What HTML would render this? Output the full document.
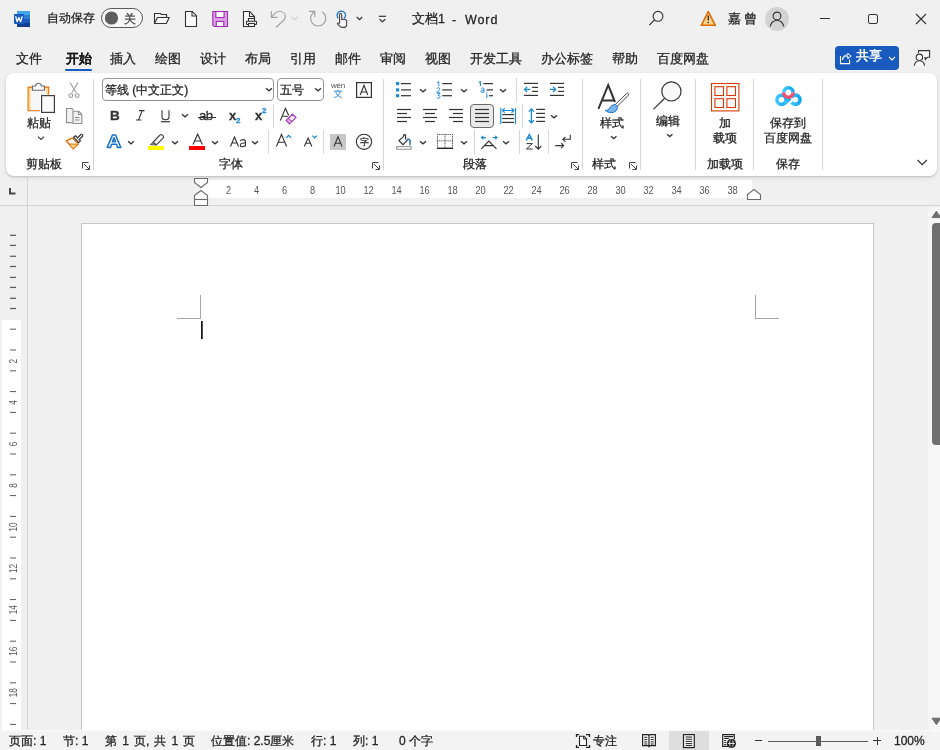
<!DOCTYPE html>
<html><head><meta charset="utf-8"><style>
html,body{margin:0;padding:0}
body{width:940px;height:750px;position:relative;overflow:hidden;background:#f0f0f0;font-family:"Liberation Sans",sans-serif}
div,svg{position:absolute}
.t{white-space:nowrap;will-change:transform;-webkit-text-stroke:0.3px currentColor}
</style></head><body>
<svg style="left:13px;top:10px;" width="19" height="19" viewBox="0 0 19 19">
<rect x="4" y="1" width="13" height="4" fill="#41a5ee"/>
<rect x="4" y="5" width="13" height="4" fill="#2b7cd3"/>
<rect x="4" y="9" width="13" height="4" fill="#185abd"/>
<rect x="4" y="13" width="13" height="4" fill="#103f91"/>
<rect x="1" y="4" width="10" height="10" rx="1" fill="#185abd"/>
<path d="M2.6 6.3 L4.2 11.7 L5.9 7.6 L7.6 11.7 L9.3 6.3" fill="none" stroke="#fff" stroke-width="1.3" stroke-linejoin="round"/>
</svg>
<div style="left:101px;top:8px;width:42px;height:20px;box-sizing:border-box;border:1px solid #5a5a5a;border-radius:10px;background:#f7f7f7"></div>
<svg style="left:101px;top:8px;" width="42" height="20" viewBox="0 0 42 20"><circle cx="10.5" cy="10" r="6.6" fill="#5d5d5d"/></svg>
<div class="t" style="left:124px;top:13px;font-size:12px;line-height:12px;color:#444;">关</div>
<svg style="left:150px;top:8px;" width="24" height="20" viewBox="0 0 24 20"><path d="M4.5 15.5 V5.5 H10.5 L11.5 6.5 H16.5 V9.5" fill="none" stroke="#333" stroke-width="1.1"/>
<path d="M4.5 15.5 L7.5 9.5 H19.3 L16.3 15.5 Z" fill="#fafafa" stroke="#333" stroke-width="1.1" stroke-linejoin="round"/></svg>
<svg style="left:183px;top:9px;" width="16" height="20" viewBox="0 0 16 20"><path d="M2.5 2.5 H9.3 L13.5 6.7 V17.5 H2.5 Z" fill="#fafafa" stroke="#333" stroke-width="1.1"/><path d="M9 2.5 V7 H13.5" fill="none" stroke="#333" stroke-width="1.1"/></svg>
<svg style="left:210px;top:9px;" width="20" height="20" viewBox="0 0 20 20"><path d="M2.8 2.5 H17.5 V17.5 H4.2 L2.8 16.1 Z" fill="#dca1e4" stroke="#9f2cb3" stroke-width="1.1"/>
<rect x="5.8" y="2.5" width="8.3" height="6" fill="#fafafa" stroke="#9f2cb3" stroke-width="1.1"/>
<rect x="6.3" y="12.5" width="7.5" height="5" fill="#fafafa" stroke="#9f2cb3" stroke-width="1.1"/></svg>
<svg style="left:241px;top:9px;" width="20" height="20" viewBox="0 0 20 20"><path d="M9.5 17.5 H2.5 V2.5 H8.5 L13.5 7.5 V9.5" fill="#fafafa" stroke="#333" stroke-width="1.1"/>
<path d="M8.5 2.5 V7.5 H13.5" fill="none" stroke="#333" stroke-width="1.1"/>
<rect x="7.5" y="9.5" width="6" height="3" fill="#fafafa" stroke="#333" stroke-width="1.1"/>
<rect x="5.5" y="12.3" width="10" height="3.2" rx="0.5" fill="#fafafa" stroke="#333" stroke-width="1.1"/>
<rect x="7.5" y="14.5" width="6" height="3" fill="#fafafa" stroke="#333" stroke-width="1.1"/></svg>
<svg style="left:266px;top:8px;" width="22" height="22" viewBox="0 0 22 22"><path d="M5.4 3.3 V9.3 H11.5" fill="none" stroke="#a3a3a3" stroke-width="1.2"/><path d="M5.8 9 C8 5.5 11 3.5 14 3.5 C17.5 3.5 19.3 6 19.3 8.5 C19.3 10 18.5 11.5 17.5 12.5 L10 19.5" fill="none" stroke="#a3a3a3" stroke-width="1.2"/></svg>
<svg style="left:290px;top:14px;" width="9" height="8" viewBox="0 0 9 8"><path d="M1.5 3 L4.5 5.8 L7.5 3" fill="none" stroke="#b5b5b5" stroke-width="1"/></svg>
<svg style="left:306px;top:8px;" width="22" height="22" viewBox="0 0 22 22"><path d="M16 3.8 A7.6 7.6 0 1 1 8.8 3.6" fill="none" stroke="#a3a3a3" stroke-width="1.2"/><path d="M3 3.3 H8.8 V9" fill="none" stroke="#a3a3a3" stroke-width="1.2"/></svg>
<svg style="left:332px;top:8px;" width="20" height="22" viewBox="0 0 20 22"><path d="M6.3 10.2 A4.2 4.2 0 1 1 11.9 10.6" fill="none" stroke="#1a73c9" stroke-width="1.3"/>
<path d="M7.6 15.5 V6.5 A1.05 1.05 0 0 1 9.7 6.5 V11.6 C11 11.2 13.6 11.6 14.6 12.6 V16.8 C14.6 18.6 13.6 19.4 12.2 19.4 H9.8 C8.8 19.4 8.3 19 7.6 18.2 L5.4 15.6 C5.8 14.9 6.8 14.9 7.6 15.5" fill="#f6f6f6" stroke="#444" stroke-width="1.1" stroke-linejoin="round"/></svg>
<svg style="left:354px;top:14px;" width="11" height="8" viewBox="0 0 11 8"><path d="M2.8 3 L5.5 5.7 L8.2 3" fill="none" stroke="#333" stroke-width="1.2"/></svg>
<svg style="left:376px;top:12px;" width="14" height="14" viewBox="0 0 14 14"><path d="M2.8 4.3 H10" stroke="#333" stroke-width="1.2"/><path d="M3.5 7.2 L6.4 9.8 L9.3 7.2" fill="none" stroke="#333" stroke-width="1.2"/></svg>
<svg style="left:646px;top:9px;" width="20" height="20" viewBox="0 0 20 20"><circle cx="12" cy="7.3" r="4.9" fill="none" stroke="#333" stroke-width="1.1"/><path d="M8.5 10.8 L3.3 16.2" stroke="#333" stroke-width="1.2"/></svg>
<svg style="left:699px;top:9px;" width="20" height="19" viewBox="0 0 20 19"><path d="M9.3 2.6 L16.3 16.3 H2.3 Z" fill="#f6d58a" stroke="#e06b00" stroke-width="1.6" stroke-linejoin="round"/><path d="M9.3 6.5 V11.5" stroke="#333" stroke-width="1.4"/><rect x="8.6" y="12.8" width="1.4" height="1.4" fill="#333"/></svg>
<svg style="left:765px;top:7px;" width="24" height="24" viewBox="0 0 24 24"><circle cx="12" cy="12" r="12" fill="#d3d3d3"/><circle cx="12" cy="9" r="3.9" fill="none" stroke="#333" stroke-width="1.1"/><path d="M5.2 19.5 C6 16 8.5 13.5 12 13.5 C15.5 13.5 18 16 18.8 19.5" fill="none" stroke="#333" stroke-width="1.1"/></svg>
<div style="left:820px;top:18px;width:10px;height:1px;background:#333"></div>
<div style="left:868px;top:14px;width:10px;height:10px;box-sizing:border-box;border:1px solid #333;border-radius:2px"></div>
<svg style="left:914px;top:12px;" width="14" height="14" viewBox="0 0 14 14"><path d="M2 2 L12 12 M12 2 L2 12" stroke="#333" stroke-width="1.1"/></svg>
<div class="t" style="left:47px;top:12px;font-size:12px;line-height:12px;color:#262626;">自动保存</div>
<div class="t" style="left:412px;top:13px;font-size:12.5px;line-height:12.5px;color:#262626;">文档1</div>
<div class="t" style="left:452px;top:13.5px;font-size:12.5px;line-height:12.5px;color:#262626;">-</div>
<div class="t" style="left:464.5px;top:13.5px;font-size:12.5px;line-height:12.5px;color:#262626;letter-spacing:0.9px">Word</div>
<div class="t" style="left:728px;top:13px;font-size:12.5px;line-height:12.5px;color:#1a1a1a;font-weight:500">嘉</div>
<div class="t" style="left:744px;top:13px;font-size:12.5px;line-height:12.5px;color:#1a1a1a;font-weight:500">曾</div>
<div class="t" style="left:16px;top:52px;font-size:13px;line-height:13px;color:#262626;">文件</div>
<div class="t" style="left:65.5px;top:52px;font-size:13px;line-height:13px;color:#1a1a1a;font-weight:bold;-webkit-text-stroke:0.1px currentColor">开始</div>
<div class="t" style="left:110px;top:52px;font-size:13px;line-height:13px;color:#262626;">插入</div>
<div class="t" style="left:155px;top:52px;font-size:13px;line-height:13px;color:#262626;">绘图</div>
<div class="t" style="left:200px;top:52px;font-size:13px;line-height:13px;color:#262626;">设计</div>
<div class="t" style="left:245px;top:52px;font-size:13px;line-height:13px;color:#262626;">布局</div>
<div class="t" style="left:290px;top:52px;font-size:13px;line-height:13px;color:#262626;">引用</div>
<div class="t" style="left:335px;top:52px;font-size:13px;line-height:13px;color:#262626;">邮件</div>
<div class="t" style="left:380px;top:52px;font-size:13px;line-height:13px;color:#262626;">审阅</div>
<div class="t" style="left:425px;top:52px;font-size:13px;line-height:13px;color:#262626;">视图</div>
<div class="t" style="left:470px;top:52px;font-size:13px;line-height:13px;color:#262626;">开发工具</div>
<div class="t" style="left:541px;top:52px;font-size:13px;line-height:13px;color:#262626;">办公标签</div>
<div class="t" style="left:612px;top:52px;font-size:13px;line-height:13px;color:#262626;">帮助</div>
<div class="t" style="left:657px;top:52px;font-size:13px;line-height:13px;color:#262626;">百度网盘</div>
<div style="left:65px;top:69px;width:27px;height:2px;background:#185abd;border-radius:1px"></div>
<div style="left:835px;top:46px;width:64px;height:24px;background:#185abd;border-radius:4px"></div>
<div class="t" style="left:856px;top:50px;font-size:12.5px;line-height:12.5px;color:#fff;font-weight:bold;-webkit-text-stroke:0">共享</div>
<div style="left:6px;top:73px;width:931px;height:103px;background:#fff;border-radius:8px;box-shadow:0 1px 2px rgba(0,0,0,0.16),0 2px 5px rgba(0,0,0,0.07)"></div>
<svg style="left:24px;top:80px;" width="34" height="36" viewBox="0 0 34 36">
<path d="M5.1 8.1 V30.3 H15.9 V15 H23.7 V8.1 Z" fill="#f7f7f7"/>
<path d="M5.6 30.3 V8.6 H23.2 V14.6" fill="none" stroke="#fad88b" stroke-width="2"/>
<path d="M4.1 7.1 V30.8 H15.9 M4.1 7.1 H24.7 V14.6" fill="none" stroke="#e56c00" stroke-width="1.1"/>
<path d="M8.5 6 H11.5 C12 4 13 3.2 14.5 3.2 C16 3.2 17 4 17.5 6 H20.5 V10.3 H8.5 Z" fill="#fafafa" stroke="#6b6b6b" stroke-width="1.1"/>
<rect x="17.6" y="15.6" width="12.8" height="16.8" fill="#fafafa" stroke="#404040" stroke-width="1.2"/>
</svg>
<svg style="left:34px;top:134px;" width="14" height="8" viewBox="0 0 14 8"><path d="M4 2.6 L7 5.4 L10 2.6" fill="none" stroke="#333" stroke-width="1.1"/></svg>
<svg style="left:66px;top:80px;" width="16" height="20" viewBox="0 0 16 20"><path d="M4 2.5 L10.2 12.8 M12 2.5 L5.8 12.8" stroke="#9a9a9a" stroke-width="1.1" fill="none"/><circle cx="4.8" cy="15.6" r="1.9" fill="none" stroke="#9a9a9a" stroke-width="1.1"/><circle cx="11.2" cy="15.6" r="1.9" fill="none" stroke="#9a9a9a" stroke-width="1.1"/></svg>
<svg style="left:64px;top:106px;" width="20" height="20" viewBox="0 0 20 20"><path d="M8.5 16.6 H2.5 V2.5 H7.8 L9.5 4.2" fill="#f2f2f2" stroke="#8e8e8e" stroke-width="1.1"/>
<path d="M9 5.2 H14.8 L17.8 8.2 V17.5 H9 Z" fill="#f2f2f2" stroke="#8e8e8e" stroke-width="1.1"/>
<path d="M14.5 5.2 V8.5 H17.8" fill="none" stroke="#8e8e8e" stroke-width="1.1"/>
<path d="M11 11.5 H15.5 M11 14 H15.5" stroke="#8e8e8e" stroke-width="1"/></svg>
<svg style="left:64px;top:132px;" width="20" height="20" viewBox="0 0 20 20"><path d="M2.2 8.8 L8.6 5.9 L14.3 12 L9.2 16.8 Z" fill="#fafafa" stroke="#e56c00" stroke-width="1.3" stroke-linejoin="round"/>
<path d="M6.5 12.6 L12.5 12.3 L9.2 16.4 Z" fill="#fbd98a"/>
<path d="M5.5 12 L12.6 12.3" stroke="#e56c00" stroke-width="1.1"/>
<path d="M9.6 5.2 L11.5 3.6 L16.5 8.8 L14.6 10.6 Z" fill="#fafafa" stroke="#333" stroke-width="1.2" stroke-linejoin="round"/>
<path d="M13 6.4 L16.8 2.5 A1.3 1.3 0 0 1 18.6 4.3 L14.7 8.1" fill="#fafafa" stroke="#333" stroke-width="1.2"/></svg>
<svg style="left:81px;top:161px;" width="10" height="10" viewBox="0 0 10 10"><path d="M1.5 7.5 V1.5 H7.5" fill="none" stroke="#444" stroke-width="1"/><path d="M3 3 L8.2 8.2 M8.5 4.5 V8.5 H4.5" fill="none" stroke="#444" stroke-width="1"/></svg>
<div style="left:93px;top:79px;width:1px;height:91px;background:#d6d6d6"></div>
<div style="left:383px;top:79px;width:1px;height:91px;background:#d6d6d6"></div>
<div style="left:582px;top:79px;width:1px;height:91px;background:#d6d6d6"></div>
<div style="left:640px;top:79px;width:1px;height:91px;background:#d6d6d6"></div>
<div style="left:695px;top:79px;width:1px;height:91px;background:#d6d6d6"></div>
<div style="left:753px;top:79px;width:1px;height:91px;background:#d6d6d6"></div>
<div style="left:822px;top:79px;width:1px;height:91px;background:#d6d6d6"></div>
<div class="t" style="left:26px;top:158px;font-size:12px;line-height:12px;color:#262626;">剪贴板</div>
<div class="t" style="left:219px;top:158px;font-size:12px;line-height:12px;color:#262626;">字体</div>
<div class="t" style="left:463px;top:158px;font-size:12px;line-height:12px;color:#262626;">段落</div>
<div class="t" style="left:592px;top:158px;font-size:12px;line-height:12px;color:#262626;">样式</div>
<div class="t" style="left:707px;top:158px;font-size:12px;line-height:12px;color:#262626;">加载项</div>
<div class="t" style="left:776px;top:158px;font-size:12px;line-height:12px;color:#262626;">保存</div>
<div class="t" style="left:27px;top:117px;font-size:12px;line-height:12px;color:#262626;">粘贴</div>
<div class="t" style="left:600px;top:117px;font-size:12px;line-height:12px;color:#262626;">样式</div>
<div class="t" style="left:656px;top:115px;font-size:12px;line-height:12px;color:#262626;">编辑</div>
<div class="t" style="left:719px;top:117px;font-size:12px;line-height:12px;color:#262626;">加</div>
<div class="t" style="left:713px;top:132px;font-size:12px;line-height:12px;color:#262626;">载项</div>
<div class="t" style="left:770px;top:117px;font-size:12px;line-height:12px;color:#262626;">保存到</div>
<div class="t" style="left:764px;top:132px;font-size:12px;line-height:12px;color:#262626;">百度网盘</div>
<div style="left:102px;top:78px;width:172px;height:23px;box-sizing:border-box;border:1px solid #969696;border-radius:4px;background:#fff"></div>
<div class="t" style="left:105px;top:84px;font-size:12px;line-height:12px;color:#262626;">等线 (中文正文)</div>
<div style="left:277px;top:78px;width:47px;height:23px;box-sizing:border-box;border:1px solid #969696;border-radius:4px;background:#fff"></div>
<div class="t" style="left:280px;top:84px;font-size:12px;line-height:12px;color:#262626;">五号</div>
<svg style="left:265px;top:87px;" width="8" height="6" viewBox="0 0 8 6"><path d="M1 1.3 L4.0 3.8 L7 1.3" fill="none" stroke="#333" stroke-width="1.3"/></svg>
<svg style="left:314px;top:87px;" width="8" height="6" viewBox="0 0 8 6"><path d="M1 1.3 L4.0 3.8 L7 1.3" fill="none" stroke="#333" stroke-width="1.3"/></svg>
<svg style="left:329px;top:80px;will-change:transform;" width="18" height="20" viewBox="0 0 18 20"><text x="9" y="8.3" text-anchor="middle" font-family="Liberation Sans" font-size="8" fill="#555" letter-spacing="-0.3">wén</text>
<path d="M5 11.2 H13 M9 9.8 V11.2 M6.8 12 C7.5 14.5 9.5 16.5 12.8 17.8 M11.2 12 C10.5 14.5 8.5 16.5 5.2 17.8" fill="none" stroke="#2b8ad8" stroke-width="1"/></svg>
<svg style="left:354px;top:80px;" width="20" height="20" viewBox="0 0 20 20"><rect x="2.6" y="2.6" width="14.8" height="14.8" fill="#fafafa" stroke="#333" stroke-width="1.2"/><path d="M6.2 15 L10 5.2 L13.8 15 M7.4 12 H12.6" fill="none" stroke="#333" stroke-width="1.1"/></svg>
<div class="t" style="left:110px;top:109px;font-size:13.5px;line-height:13.5px;color:#333;font-family:'Liberation Sans';"><b>B</b></div>
<svg style="left:134px;top:108px;" width="12" height="14" viewBox="0 0 12 14"><path d="M5 2.6 H10.5 M2 12 H7.5 M8.2 2.6 L4.5 12" fill="none" stroke="#333" stroke-width="1.1"/></svg>
<svg style="left:159px;top:108px;" width="14" height="16" viewBox="0 0 14 16"><path d="M3 2.3 V8.5 C3 10.8 4.5 11.8 6.5 11.8 C8.5 11.8 10 10.8 10 8.5 V2.3" fill="none" stroke="#333" stroke-width="1.1"/><path d="M2 13.7 H11" stroke="#333" stroke-width="1.2"/></svg>
<svg style="left:181px;top:113px;" width="8" height="6" viewBox="0 0 8 6"><path d="M1 1.3 L4.0 3.8 L7 1.3" fill="none" stroke="#333" stroke-width="1.3"/></svg>
<div class="t" style="left:199px;top:109px;font-size:13px;line-height:13px;color:#333;font-family:'Liberation Sans';letter-spacing:-0.5px">ab</div>
<div style="left:198px;top:117px;width:18px;height:1px;background:#333"></div>
<div class="t" style="left:229px;top:109px;font-size:13px;line-height:13px;color:#333;font-family:'Liberation Sans';font-weight:bold">x</div>
<div class="t" style="left:236px;top:117px;font-size:8px;line-height:8px;color:#1f8ad6;font-family:'Liberation Sans';font-weight:bold">2</div>
<div class="t" style="left:255px;top:109px;font-size:13px;line-height:13px;color:#333;font-family:'Liberation Sans';font-weight:bold">x</div>
<div class="t" style="left:262px;top:107px;font-size:8px;line-height:8px;color:#1f8ad6;font-family:'Liberation Sans';font-weight:bold">2</div>
<div style="left:273px;top:104px;width:1px;height:24px;background:#d6d6d6"></div>
<svg style="left:278px;top:106px;" width="20" height="20" viewBox="0 0 20 20"><path d="M2.4 14.5 L7.4 2.4 L10.8 9.4 M4.3 10.3 H10" fill="none" stroke="#333" stroke-width="1.1"/>
<path d="M8.2 14.5 L14.4 8.2 L18 11.4 L11.6 17.8 Z" fill="#fafafa" stroke="#a23cb8" stroke-width="1.3" stroke-linejoin="round"/>
<path d="M10.4 12.4 L13.8 15.6" stroke="#a23cb8" stroke-width="1.2"/><path d="M9.3 13.6 L12.7 16.8" stroke="#d9a3e3" stroke-width="1.5"/></svg>
<svg style="left:104px;top:132px;" width="20" height="20" viewBox="0 0 20 20"><path d="M3.2 15.5 L8.5 3 H11.5 L16.8 15.5 H13.6 L12.4 12.3 H7.6 L6.4 15.5 Z M8.5 9.8 H11.5 L10 5.8 Z" fill="#fff" stroke="#1a6fcf" stroke-width="1.6" stroke-linejoin="round"/></svg>
<svg style="left:127px;top:140px;" width="8" height="6" viewBox="0 0 8 6"><path d="M1 1.3 L4.0 3.8 L7 1.3" fill="none" stroke="#333" stroke-width="1.3"/></svg>
<svg style="left:147px;top:132px;" width="18" height="20" viewBox="0 0 18 20"><path d="M6.2 10 L13 3 A1.6 1.6 0 0 1 15.4 3.1 L16 3.8 A1.6 1.6 0 0 1 16.1 6.2 L9.2 13 Z" fill="#fafafa" stroke="#444" stroke-width="1.1" stroke-linejoin="round"/>
<path d="M6.2 10 L3 12.8 L5 12.8 L9.2 13 Z" fill="#777" stroke="#555" stroke-width="0.8"/></svg>
<div style="left:148px;top:146px;width:16px;height:4px;background:#ffff00"></div>
<svg style="left:171px;top:140px;" width="8" height="6" viewBox="0 0 8 6"><path d="M1 1.3 L4.0 3.8 L7 1.3" fill="none" stroke="#333" stroke-width="1.3"/></svg>
<svg style="left:190px;top:132px;" width="16" height="14" viewBox="0 0 16 14"><path d="M3 12.6 L7.7 2.2 L12.4 12.6 M4.6 9 H10.8" fill="none" stroke="#333" stroke-width="1.1"/></svg>
<div style="left:189px;top:146px;width:16px;height:4px;background:#ff0000"></div>
<svg style="left:211px;top:140px;" width="8" height="6" viewBox="0 0 8 6"><path d="M1 1.3 L4.0 3.8 L7 1.3" fill="none" stroke="#333" stroke-width="1.3"/></svg>
<svg style="left:228px;top:135px;" width="22" height="14" viewBox="0 0 22 14"><path d="M2.5 11.5 L6.5 2 L10.5 11.5 M4 8 H9" fill="none" stroke="#333" stroke-width="1.1"/><path d="M12.3 6 C13 4.8 14 4.6 15 4.6 C16.5 4.6 17.5 5.4 17.5 7 V11.6 M17.5 8 C15.5 7.8 12.3 8 12.3 10 C12.3 11.4 13.5 11.8 14.5 11.8 C16 11.8 17.2 10.8 17.5 10" fill="none" stroke="#333" stroke-width="1.1"/></svg>
<svg style="left:251px;top:140px;" width="8" height="6" viewBox="0 0 8 6"><path d="M1 1.3 L4.0 3.8 L7 1.3" fill="none" stroke="#333" stroke-width="1.3"/></svg>
<div style="left:268px;top:130px;width:1px;height:24px;background:#d6d6d6"></div>
<svg style="left:274px;top:132px;" width="20" height="17" viewBox="0 0 20 17"><path d="M2.4 14.5 L7.5 2.5 L12.6 14.5 M4.2 10.2 H10.8" fill="none" stroke="#333" stroke-width="1.1"/><path d="M12.3 5.8 L14.6 3.4 L16.9 5.8" fill="none" stroke="#1f8ad6" stroke-width="1.3"/></svg>
<svg style="left:302px;top:132px;" width="18" height="17" viewBox="0 0 18 17"><path d="M2.3 14.5 L6.1 6 L9.9 14.5 M3.6 11.2 H8.6" fill="none" stroke="#333" stroke-width="1.1"/><path d="M10.4 3.6 L12.7 5.8 L15 3.6" fill="none" stroke="#1f8ad6" stroke-width="1.3"/></svg>
<div style="left:323px;top:130px;width:1px;height:24px;background:#d6d6d6"></div>
<div style="left:330px;top:134px;width:16px;height:16px;background:#c8c8c8"></div>
<svg style="left:330px;top:134px;" width="16" height="16" viewBox="0 0 16 16"><path d="M4 12.5 L8 2.8 L12 12.5 M5.3 9.3 H10.7" fill="none" stroke="#333" stroke-width="1.1"/></svg>
<svg style="left:354px;top:132px;" width="20" height="20" viewBox="0 0 20 20"><circle cx="10" cy="9.8" r="7.6" fill="none" stroke="#333" stroke-width="1.1"/></svg>
<div class="t" style="left:360px;top:138px;font-size:8.5px;line-height:8.5px;color:#333;">字</div>
<svg style="left:371px;top:161px;" width="10" height="10" viewBox="0 0 10 10"><path d="M1.5 7.5 V1.5 H7.5" fill="none" stroke="#444" stroke-width="1"/><path d="M3 3 L8.2 8.2 M8.5 4.5 V8.5 H4.5" fill="none" stroke="#444" stroke-width="1"/></svg>
<svg style="left:395px;top:81px;" width="18" height="18" viewBox="0 0 18 18"><g fill="#1f8ad6"><rect x="1" y="1" width="3.2" height="3.2"/><rect x="1" y="7.3" width="3.2" height="3.2"/><rect x="1" y="13.1" width="3.2" height="3.2"/></g><g stroke="#333" stroke-width="1.2"><path d="M6 2.6 H16"/><path d="M6 8.9 H16"/><path d="M6 14.7 H16"/></g></svg>
<svg style="left:419px;top:88px;" width="8" height="6" viewBox="0 0 8 6"><path d="M1 1.3 L4.0 3.8 L7 1.3" fill="none" stroke="#333" stroke-width="1.3"/></svg>
<svg style="left:436px;top:81px;" width="18" height="19" viewBox="0 0 18 19"><path d="M1.2 1.7999999999999998 L2.8 0.6 V5.199999999999999" fill="none" stroke="#1f8ad6" stroke-width="0.95"/><path d="M0.8 7.699999999999999 C1.1 6.3999999999999995 3.8 6.3 3.8 7.8999999999999995 C3.8 9.1 1.4 10.0 0.8 11.2 H4.1" fill="none" stroke="#1f8ad6" stroke-width="0.95"/><path d="M0.8 12.6 H3.8 L2.1 14.5 C3.8 14.5 4.1 15.2 4.1 15.8 C4.1 17.2 1.8 17.5 0.8 16.8" fill="none" stroke="#1f8ad6" stroke-width="0.95"/><g stroke="#333" stroke-width="1.2"><path d="M6.3 2.6 H16"/><path d="M6.3 8.9 H16"/><path d="M6.3 14.7 H16"/></g></svg>
<svg style="left:460px;top:88px;" width="8" height="6" viewBox="0 0 8 6"><path d="M1 1.3 L4.0 3.8 L7 1.3" fill="none" stroke="#333" stroke-width="1.3"/></svg>
<svg style="left:478px;top:81px;" width="18" height="19" viewBox="0 0 18 19"><path d="M0.8 1.6 L2.4000000000000004 0.4 V5.0" fill="none" stroke="#1f8ad6" stroke-width="1.1"/><path d="M3.2 7.6 C3.6 6.8 6 6.5 6 8.2 V11.4 M6 9.2 C4 9 2.9 9.5 2.9 10.4 C2.9 11.6 5 11.6 6 10.6" fill="none" stroke="#1f8ad6" stroke-width="1"/><path d="M8.8 13.2 V17" stroke="#1f8ad6" stroke-width="1.1"/><rect x="8.3" y="11.4" width="1.1" height="1.1" fill="#1f8ad6"/><g stroke="#333" stroke-width="1.2"><path d="M5.4 2.6 H15"/><path d="M8.5 8.9 H15"/><path d="M11 14.7 H15"/></g></svg>
<svg style="left:499px;top:88px;" width="8" height="6" viewBox="0 0 8 6"><path d="M1 1.3 L4.0 3.8 L7 1.3" fill="none" stroke="#333" stroke-width="1.3"/></svg>
<div style="left:516px;top:78px;width:1px;height:24px;background:#d6d6d6"></div>
<svg style="left:523px;top:81px;" width="17" height="17" viewBox="0 0 17 17"><g stroke="#333" stroke-width="1.2"><path d="M1 2.4 H15"/><path d="M9.1 6.4 H15"/><path d="M9.1 10.4 H15"/><path d="M1 14.4 H15"/></g><path d="M7.2 8.4 H1.8 M4.2 5.8 L1.5 8.4 L4.2 11" fill="none" stroke="#1f8ad6" stroke-width="1.3"/></svg>
<svg style="left:549px;top:81px;" width="17" height="17" viewBox="0 0 17 17"><g stroke="#333" stroke-width="1.2"><path d="M1 2.4 H15"/><path d="M9.1 6.4 H15"/><path d="M9.1 10.4 H15"/><path d="M1 14.4 H15"/></g><path d="M1 8.4 H6.5 M4 5.8 L6.7 8.4 L4 11" fill="none" stroke="#1f8ad6" stroke-width="1.3"/></svg>
<svg style="left:396px;top:107px;" width="16" height="16" viewBox="0 0 16 16"><g stroke="#333" stroke-width="1.2"><path d="M1 2.5 H15"/><path d="M1 6.5 H11"/><path d="M1 10.5 H15"/><path d="M1 14.5 H11"/></g></svg>
<svg style="left:422px;top:107px;" width="16" height="16" viewBox="0 0 16 16"><g stroke="#333" stroke-width="1.2"><path d="M1 2.5 H15"/><path d="M3 6.5 H13"/><path d="M1 10.5 H15"/><path d="M3 14.5 H13"/></g></svg>
<svg style="left:448px;top:107px;" width="16" height="16" viewBox="0 0 16 16"><g stroke="#333" stroke-width="1.2"><path d="M1 2.5 H15"/><path d="M5 6.5 H15"/><path d="M1 10.5 H15"/><path d="M5 14.5 H15"/></g></svg>
<div style="left:470px;top:104px;width:24px;height:24px;box-sizing:border-box;border:1.3px solid #6a6a6a;border-radius:4px;background:#e9e9e9"></div>
<svg style="left:474px;top:107px;" width="16" height="16" viewBox="0 0 16 16"><g stroke="#333" stroke-width="1.2"><path d="M1 2.5 H15"/><path d="M1 6.5 H15"/><path d="M1 10.5 H15"/><path d="M1 14.5 H15"/></g></svg>
<svg style="left:498px;top:106px;" width="20" height="20" viewBox="0 0 20 20"><path d="M2.8 2 V18 M17.5 2 V18" stroke="#1f8ad6" stroke-width="1.2"/>
<path d="M4.5 4.5 H15.8 M6.8 2.3 L4.5 4.5 L6.8 6.7 M13.5 2.3 L15.8 4.5 L13.5 6.7" fill="none" stroke="#1f8ad6" stroke-width="1.2"/>
<g stroke="#333" stroke-width="1.2"><path d="M4.2 8.6 H16"/><path d="M4.2 12.5 H16"/><path d="M4.2 16.4 H16"/></g></svg>
<div style="left:522px;top:104px;width:1px;height:24px;background:#d6d6d6"></div>
<svg style="left:527px;top:107px;" width="20" height="18" viewBox="0 0 20 18"><path d="M4.4 2 V15.8 M1.8 4.6 L4.4 2 L7 4.6 M1.8 13.2 L4.4 15.8 L7 13.2" fill="none" stroke="#1f8ad6" stroke-width="1.3"/>
<g stroke="#333" stroke-width="1.2"><path d="M9.2 2.4 H18"/><path d="M9.2 6.4 H18"/><path d="M9.2 10.4 H18"/><path d="M9.2 14.4 H18"/></g></svg>
<svg style="left:550px;top:114px;" width="8" height="6" viewBox="0 0 8 6"><path d="M1 1.3 L4.0 3.8 L7 1.3" fill="none" stroke="#333" stroke-width="1.3"/></svg>
<svg style="left:394px;top:132px;" width="20" height="20" viewBox="0 0 20 20"><path d="M9.6 4.4 L4.9 8.6 L9.1 12.7 L14 7.3" fill="#fafafa" stroke="#333" stroke-width="1.2" stroke-linejoin="round"/>
<path d="M9.6 4.6 V3.4 C9.6 2.3 11.6 2.3 11.6 3.4 V7.4" fill="none" stroke="#333" stroke-width="1.2"/>
<path d="M14 6.9 C15.8 6.9 16.6 8.5 15.9 12.6" fill="none" stroke="#1f6fc0" stroke-width="1.5" stroke-linecap="round"/>
<rect x="2.7" y="14.6" width="14.4" height="2.6" fill="#fff" stroke="#8a8a8a" stroke-width="1"/></svg>
<svg style="left:419px;top:140px;" width="8" height="6" viewBox="0 0 8 6"><path d="M1 1.3 L4.0 3.8 L7 1.3" fill="none" stroke="#333" stroke-width="1.3"/></svg>
<svg style="left:436px;top:133px;" width="18" height="18" viewBox="0 0 18 18"><g fill="#444"><rect x="1.00" y="1" width="1" height="1"/><rect x="1.00" y="7.3" width="1" height="1"/><rect x="2.88" y="1" width="1" height="1"/><rect x="2.88" y="7.3" width="1" height="1"/><rect x="4.75" y="1" width="1" height="1"/><rect x="4.75" y="7.3" width="1" height="1"/><rect x="6.62" y="1" width="1" height="1"/><rect x="6.62" y="7.3" width="1" height="1"/><rect x="8.50" y="1" width="1" height="1"/><rect x="8.50" y="7.3" width="1" height="1"/><rect x="10.38" y="1" width="1" height="1"/><rect x="10.38" y="7.3" width="1" height="1"/><rect x="12.25" y="1" width="1" height="1"/><rect x="12.25" y="7.3" width="1" height="1"/><rect x="14.12" y="1" width="1" height="1"/><rect x="14.12" y="7.3" width="1" height="1"/><rect x="16.00" y="1" width="1" height="1"/><rect x="16.00" y="7.3" width="1" height="1"/><rect x="1" y="1.00" width="1" height="1"/><rect x="16" y="1.00" width="1" height="1"/><rect x="8.5" y="1.00" width="1" height="1"/><rect x="1" y="2.79" width="1" height="1"/><rect x="16" y="2.79" width="1" height="1"/><rect x="8.5" y="2.79" width="1" height="1"/><rect x="1" y="4.57" width="1" height="1"/><rect x="16" y="4.57" width="1" height="1"/><rect x="8.5" y="4.57" width="1" height="1"/><rect x="1" y="6.36" width="1" height="1"/><rect x="16" y="6.36" width="1" height="1"/><rect x="8.5" y="6.36" width="1" height="1"/><rect x="1" y="8.14" width="1" height="1"/><rect x="16" y="8.14" width="1" height="1"/><rect x="8.5" y="8.14" width="1" height="1"/><rect x="1" y="9.93" width="1" height="1"/><rect x="16" y="9.93" width="1" height="1"/><rect x="8.5" y="9.93" width="1" height="1"/><rect x="1" y="11.71" width="1" height="1"/><rect x="16" y="11.71" width="1" height="1"/><rect x="8.5" y="11.71" width="1" height="1"/><rect x="1" y="13.50" width="1" height="1"/><rect x="16" y="13.50" width="1" height="1"/><rect x="8.5" y="13.50" width="1" height="1"/></g><path d="M1 15.3 H17" stroke="#222" stroke-width="1.4"/></svg>
<svg style="left:460px;top:140px;" width="8" height="6" viewBox="0 0 8 6"><path d="M1 1.3 L4.0 3.8 L7 1.3" fill="none" stroke="#333" stroke-width="1.3"/></svg>
<div style="left:474px;top:130px;width:1px;height:24px;background:#d6d6d6"></div>
<svg style="left:479px;top:134px;" width="20" height="17" viewBox="0 0 20 17"><path d="M2.5 3.6 H7 M4.3 1.8 L2.5 3.6 L4.3 5.4 M13.5 3.6 H18 M16.2 1.8 L18 3.6 L16.2 5.4" fill="none" stroke="#1f8ad6" stroke-width="1.2"/>
<path d="M2.3 14.8 L9.8 7 L17.5 14.8 M5.6 11.6 H13.9" fill="none" stroke="#333" stroke-width="1.2"/></svg>
<svg style="left:502px;top:140px;" width="8" height="6" viewBox="0 0 8 6"><path d="M1 1.3 L4.0 3.8 L7 1.3" fill="none" stroke="#333" stroke-width="1.3"/></svg>
<div style="left:519px;top:130px;width:1px;height:24px;background:#d6d6d6"></div>
<svg style="left:524px;top:132px;" width="20" height="20" viewBox="0 0 20 20"><path d="M2.2 8.3 L5.3 2.6 L8.4 8.3 M3.3 6.3 H7.3" fill="none" stroke="#1f8ad6" stroke-width="1.5"/>
<path d="M2.4 11.6 H8.4 L2.4 17 H8.7" fill="none" stroke="#333" stroke-width="1"/>
<path d="M14.3 2.5 V17 M11.2 14 L14.3 17.2 L17.4 14" fill="none" stroke="#333" stroke-width="1.1"/></svg>
<div style="left:548px;top:130px;width:1px;height:24px;background:#d6d6d6"></div>
<svg style="left:553px;top:132px;" width="20" height="20" viewBox="0 0 20 20"><path d="M17.3 2.8 V7.3 H10 M12.4 4.8 L9.8 7.3 L12.4 9.8" fill="none" stroke="#333" stroke-width="1.1"/>
<path d="M2.2 13.6 H10.6 M8.1 11.1 L10.6 13.6 L8.1 16.1" fill="none" stroke="#333" stroke-width="1.1"/></svg>
<svg style="left:570px;top:161px;" width="10" height="10" viewBox="0 0 10 10"><path d="M1.5 7.5 V1.5 H7.5" fill="none" stroke="#444" stroke-width="1"/><path d="M3 3 L8.2 8.2 M8.5 4.5 V8.5 H4.5" fill="none" stroke="#444" stroke-width="1"/></svg>
<svg style="left:594px;top:80px;" width="40" height="36" viewBox="0 0 40 36"><path d="M4.4 28.8 L14.2 5.2 L21 22 M8.6 20.6 H20.2" fill="none" stroke="#333" stroke-width="2"/>
<path d="M21 24.8 L32.6 13.4 A1.3 1.3 0 0 1 34.4 15.2 L23 26.6" fill="#fafafa" stroke="#333" stroke-width="0.9"/>
<path d="M21.6 24.5 C18.8 24.5 16.6 26 15.8 28 C14.9 30 13.5 30.3 11.3 30.3 C13 32 15 32.6 17.3 32.6 C21.5 32.6 23.6 29.8 23.4 26.6 Z" fill="#7ab6e8" stroke="#1a6fc6" stroke-width="1"/></svg>
<svg style="left:610px;top:135px;" width="7.5" height="6" viewBox="0 0 7.5 6"><path d="M1 1.3 L3.75 3.55 L6.5 1.3" fill="none" stroke="#333" stroke-width="1.3"/></svg>
<svg style="left:628px;top:161px;" width="10" height="10" viewBox="0 0 10 10"><path d="M1.5 7.5 V1.5 H7.5" fill="none" stroke="#444" stroke-width="1"/><path d="M3 3 L8.2 8.2 M8.5 4.5 V8.5 H4.5" fill="none" stroke="#444" stroke-width="1"/></svg>
<svg style="left:650px;top:78px;" width="40" height="36" viewBox="0 0 40 36"><circle cx="21.4" cy="13.4" r="9.6" fill="#f9f9f9" stroke="#333" stroke-width="1.2"/><path d="M14.4 20.5 L3.4 31.4" stroke="#333" stroke-width="1.2"/></svg>
<svg style="left:666px;top:133px;" width="7.5" height="6" viewBox="0 0 7.5 6"><path d="M1 1.3 L3.75 3.55 L6.5 1.3" fill="none" stroke="#333" stroke-width="1.3"/></svg>
<svg style="left:706px;top:78px;" width="38" height="36" viewBox="0 0 38 36"><g fill="none" stroke="#d83b01" stroke-width="1.1"><rect x="5.5" y="5.5" width="27.4" height="27.4"/>
<rect x="8.9" y="8.7" width="8.6" height="8.8"/><rect x="20.9" y="8.7" width="8.6" height="8.8"/>
<rect x="8.9" y="20.7" width="8.6" height="8.8"/><rect x="20.9" y="20.7" width="8.6" height="8.8"/></g></svg>
<svg style="left:770px;top:80px;" width="38" height="30" viewBox="0 0 38 30"><defs><linearGradient id="bd" x1="0" y1="0" x2="1" y2="0"><stop offset="0" stop-color="#3cc8fb"/><stop offset="1" stop-color="#12a6f5"/></linearGradient></defs>
<g fill="none" stroke="url(#bd)" stroke-width="3.6">
<circle cx="11.5" cy="19.8" r="4.6"/>
<path d="M21.4 17.5 A4.6 4.6 0 1 1 21.6 22.3"/>
<path d="M14.8 23.2 L20.2 18.2"/>
<path d="M13.7 12.5 A4.7 4.7 0 0 1 23.1 12.5"/>
</g>
<path d="M13.7 12.5 A4.7 4.7 0 0 0 23.1 12.5" fill="none" stroke="#f4506e" stroke-width="3.6"/></svg>
<svg style="left:915px;top:157px;" width="14" height="10" viewBox="0 0 14 10"><path d="M2.6 3 L7.2 7.6 L11.8 3" fill="none" stroke="#333" stroke-width="1.2"/></svg>
<div style="left:0px;top:205px;width:940px;height:1px;background:#d4d4d4"></div>
<div style="left:27px;top:176px;width:1px;height:554px;background:#d4d4d4"></div>
<div style="left:201px;top:180px;width:551px;height:18px;background:#fff"></div>
<div style="left:2px;top:320px;width:19px;height:410px;background:#fff"></div>
<svg style="left:170px;top:170px;will-change:transform;" width="600" height="30" viewBox="0 0 600 30"><g font-family="Liberation Sans" font-size="10" fill="#555" text-anchor="middle"><text x="0" y="0" transform="translate(58.5 24) scale(0.92 1)">2</text><text x="0" y="0" transform="translate(86.5 24) scale(0.92 1)">4</text><text x="0" y="0" transform="translate(114.5 24) scale(0.92 1)">6</text><text x="0" y="0" transform="translate(142.5 24) scale(0.92 1)">8</text><text x="0" y="0" transform="translate(170.5 24) scale(0.92 1)">10</text><text x="0" y="0" transform="translate(198.5 24) scale(0.92 1)">12</text><text x="0" y="0" transform="translate(226.5 24) scale(0.92 1)">14</text><text x="0" y="0" transform="translate(254.5 24) scale(0.92 1)">16</text><text x="0" y="0" transform="translate(282.5 24) scale(0.92 1)">18</text><text x="0" y="0" transform="translate(310.5 24) scale(0.92 1)">20</text><text x="0" y="0" transform="translate(338.5 24) scale(0.92 1)">22</text><text x="0" y="0" transform="translate(366.5 24) scale(0.92 1)">24</text><text x="0" y="0" transform="translate(394.5 24) scale(0.92 1)">26</text><text x="0" y="0" transform="translate(422.5 24) scale(0.92 1)">28</text><text x="0" y="0" transform="translate(450.5 24) scale(0.92 1)">30</text><text x="0" y="0" transform="translate(478.5 24) scale(0.92 1)">32</text><text x="0" y="0" transform="translate(506.5 24) scale(0.92 1)">34</text><text x="0" y="0" transform="translate(534.5 24) scale(0.92 1)">36</text><text x="0" y="0" transform="translate(562.5 24) scale(0.92 1)">38</text></g></svg>
<svg style="left:190px;top:174px;" width="22" height="34" viewBox="0 0 22 34"><path d="M4.5 4.5 H17.5 V8.5 L11 13.5 L4.5 8.5 Z" fill="#fff" stroke="#6b6b6b" stroke-width="1.1"/>
<path d="M4.5 21.5 L11 16.5 L17.5 21.5 V31.5 H4.5 Z" fill="#fff" stroke="#6b6b6b" stroke-width="1.1"/>
<path d="M4.5 25.5 H17.5" stroke="#6b6b6b" stroke-width="1.1"/></svg>
<svg style="left:744px;top:186px;" width="20" height="16" viewBox="0 0 20 16"><path d="M3.5 13.5 V8.5 L10 3.5 L16.5 8.5 V13.5 Z" fill="#fff" stroke="#6b6b6b" stroke-width="1.1"/></svg>
<svg style="left:6px;top:185px;" width="14" height="12" viewBox="0 0 14 12"><path d="M4 3 V8.6 H9.5" fill="none" stroke="#474747" stroke-width="2"/></svg>
<svg style="left:0px;top:220px;will-change:transform;" width="27" height="510" viewBox="0 0 27 510"><g stroke="#5e5e5e" stroke-width="1.3"><path d="M10 15.3 H16"/><path d="M10 25.4 H16"/><path d="M10 36.3 H16"/><path d="M10 46.5 H16"/><path d="M10 57.4 H16"/><path d="M10 67.4 H16"/><path d="M10 78.3 H16"/><path d="M10 88.5 H16"/></g><g stroke="#5a5a5a" stroke-width="1"><path d="M10 109.2 H16"/><path d="M10 130.0 H16"/><path d="M10 150.8 H16"/><path d="M10 171.6 H16"/><path d="M10 192.4 H16"/><path d="M10 213.2 H16"/><path d="M10 234.0 H16"/><path d="M10 254.8 H16"/><path d="M10 275.6 H16"/><path d="M10 296.4 H16"/><path d="M10 317.2 H16"/><path d="M10 338.0 H16"/><path d="M10 358.8 H16"/><path d="M10 379.6 H16"/><path d="M10 400.4 H16"/><path d="M10 421.2 H16"/><path d="M10 442.0 H16"/><path d="M10 462.8 H16"/><path d="M10 483.6 H16"/><path d="M10 504.4 H16"/></g><g font-family="Liberation Sans" font-size="10" fill="#555" text-anchor="middle"><text x="0" y="0" transform="translate(17 141.2) rotate(-90) scale(0.82 1)">2</text><text x="0" y="0" transform="translate(17 182.6) rotate(-90) scale(0.82 1)">4</text><text x="0" y="0" transform="translate(17 224.1) rotate(-90) scale(0.82 1)">6</text><text x="0" y="0" transform="translate(17 265.5) rotate(-90) scale(0.82 1)">8</text><text x="0" y="0" transform="translate(17 307.0) rotate(-90) scale(0.82 1)">10</text><text x="0" y="0" transform="translate(17 348.4) rotate(-90) scale(0.82 1)">12</text><text x="0" y="0" transform="translate(17 389.8) rotate(-90) scale(0.82 1)">14</text><text x="0" y="0" transform="translate(17 431.3) rotate(-90) scale(0.82 1)">16</text><text x="0" y="0" transform="translate(17 472.7) rotate(-90) scale(0.82 1)">18</text></g></svg>
<div style="left:81px;top:223px;width:793px;height:507px;box-sizing:border-box;border:1px solid #c6c6c6;border-bottom:none;background:#fff"></div>
<div style="left:200px;top:295px;width:1px;height:24px;background:#a6a6a6"></div>
<div style="left:177px;top:318px;width:24px;height:1px;background:#a6a6a6"></div>
<div style="left:755px;top:295px;width:1px;height:24px;background:#a6a6a6"></div>
<div style="left:755px;top:318px;width:24px;height:1px;background:#a6a6a6"></div>
<svg style="left:199px;top:319px;" width="6" height="22" viewBox="0 0 6 22"><path d="M2.9 2 V20" stroke="#000" stroke-width="1.6"/></svg>
<div style="left:928px;top:207px;width:12px;height:523px;background:#f6f6f6;border-radius:6px 0 0 6px"></div>
<div style="left:932px;top:223px;width:8px;height:222px;background:#6f6f6f;border-radius:4px 0 0 4px"></div>
<div style="left:0px;top:730px;width:940px;height:1px;background:#fafafa"></div>
<div style="left:0px;top:731px;width:940px;height:19px;background:#f3f3f3"></div>
<div class="t" style="left:9px;top:735px;font-size:12px;line-height:12px;color:#262626;">页面: 1</div>
<div class="t" style="left:63px;top:735px;font-size:12px;line-height:12px;color:#262626;">节: 1</div>
<div class="t" style="left:105px;top:735px;font-size:12px;line-height:12px;color:#262626;word-spacing:1.8px">第 1 页, 共 1 页</div>
<div class="t" style="left:211px;top:735px;font-size:12px;line-height:12px;color:#262626;">位置值: 2.5厘米</div>
<div class="t" style="left:311px;top:735px;font-size:12px;line-height:12px;color:#262626;">行: 1</div>
<div class="t" style="left:353px;top:735px;font-size:12px;line-height:12px;color:#262626;">列: 1</div>
<div class="t" style="left:399px;top:735px;font-size:12px;line-height:12px;color:#262626;">0 个字</div>
<div class="t" style="left:593px;top:735px;font-size:12px;line-height:12px;color:#262626;">专注</div>
<div style="left:669px;top:731px;width:40px;height:19px;background:#dedede"></div>
<div class="t" style="left:894px;top:735px;font-size:12px;line-height:12px;color:#262626;">100%</div>
<div style="left:768px;top:741px;width:100px;height:1px;background:#5a5a5a"></div>
<div style="left:816px;top:736px;width:5px;height:10px;background:#5a5a5a"></div>
<svg style="left:928px;top:207px;" width="12" height="14" viewBox="0 0 12 14"><path d="M4 10.6 L8.4 4.2 L12.8 10.6 Z" fill="#6f6f6f" stroke="#6f6f6f" stroke-width="1" stroke-linejoin="round"/></svg>
<svg style="left:928px;top:714px;" width="12" height="14" viewBox="0 0 12 14"><path d="M4 4.2 L8.4 10.6 L12.8 4.2 Z" fill="#6f6f6f" stroke="#6f6f6f" stroke-width="1" stroke-linejoin="round"/></svg>
<svg style="left:574px;top:732px;" width="18" height="18" viewBox="0 0 18 18"><path d="M2.5 5 V2.6 H5 M12 2.6 H15.5 V5 M15.5 13 V15.3 H12 M5 15.3 H2.5 V13" fill="none" stroke="#222" stroke-width="1.3"/>
<path d="M5.5 4.2 H10 L12.5 6.7 V13.5 H5.5 Z" fill="#fafafa" stroke="#222" stroke-width="1.1"/><path d="M9.7 4.2 V7 H12.5" fill="none" stroke="#222" stroke-width="1"/></svg>
<svg style="left:640px;top:732px;" width="18" height="17" viewBox="0 0 18 17"><path d="M2.6 2.6 H7.5 C8.3 2.6 8.8 3 9 3.6 C9.2 3 9.7 2.6 10.5 2.6 H15.4 V13.6 H10.5 C9.7 13.6 9.2 14 9 14.5 C8.8 14 8.3 13.6 7.5 13.6 H2.6 Z M9 3.6 V14.5" fill="#fafafa" stroke="#222" stroke-width="1.2"/>
<g stroke="#222" stroke-width="1"><path d="M4.3 5.3 H7.3 M4.3 7.6 H7.3 M4.3 9.9 H7.3 M4.3 12 H7.3 M10.7 5.3 H13.7 M10.7 7.6 H13.7 M10.7 9.9 H13.7 M10.7 12 H13.7"/></g></svg>
<svg style="left:681px;top:732px;" width="16" height="18" viewBox="0 0 16 18"><rect x="2.5" y="2.6" width="10.8" height="13" fill="#fafafa" stroke="#222" stroke-width="1.2"/>
<g stroke="#222" stroke-width="1"><path d="M4.6 5 H11.2 M4.6 7.2 H11.2 M4.6 9.4 H11.2 M4.6 11.6 H11.2 M4.6 13.6 H11.2"/></g></svg>
<svg style="left:720px;top:732px;" width="18" height="18" viewBox="0 0 18 18"><path d="M8 14.3 H2.7 V2.7 H14.3 V7.5" fill="#fafafa" stroke="#222" stroke-width="1.2"/>
<g stroke="#222" stroke-width="1.1" stroke-linecap="round"><path d="M4.6 4.6 H12.8 M4.6 6.5 H8.5 M4.6 8.5 H5.8 M4.6 10.5 H5.8 M4.6 12.5 H5.8"/></g>
<circle cx="11.4" cy="11.4" r="4.6" fill="#222"/>
<path d="M7.6 11.4 H15.2" stroke="#f3f3f3" stroke-width="1"/><ellipse cx="11.4" cy="11.4" rx="1.8" ry="4.4" fill="none" stroke="#f3f3f3" stroke-width="0.8"/>
<circle cx="11.4" cy="11.4" r="3.8" fill="none" stroke="#222" stroke-width="0.8"/></svg>
<div style="left:755px;top:740px;width:7px;height:1px;background:#333"></div>
<div style="left:873px;top:740px;width:8px;height:1px;background:#333"></div>
<div style="left:876.5px;top:737px;width:1px;height:8px;background:#333"></div>
<svg style="left:837px;top:49px;" width="17" height="17" viewBox="0 0 17 17"><path d="M3.5 7 V14.6 H12.6 V10.6" fill="none" stroke="#fff" stroke-width="1.1"/>
<path d="M5.6 11 C5.8 8.6 7.6 6.9 10.8 7 V9.6 L14.2 7.1 L10.8 4.4 V5.8 C7.6 5.8 5.2 8 5.6 11 Z" fill="none" stroke="#fff" stroke-width="1" stroke-linejoin="round"/></svg>
<svg style="left:887px;top:55px;" width="10" height="7" viewBox="0 0 10 7"><path d="M2 1.8 L5 4.8 L8 1.8" fill="none" stroke="#fff" stroke-width="1.2"/></svg>
<svg style="left:911px;top:47px;" width="22" height="22" viewBox="0 0 22 22"><path d="M7.5 6 V3.6 H18.6 V10.3 H16.3 L14.3 12.6 V10.6 H13.3" fill="#fafafa" stroke="#333" stroke-width="1.1" stroke-linejoin="round"/>
<circle cx="8.4" cy="10.3" r="3.2" fill="#fafafa" stroke="#333" stroke-width="1.1"/>
<path d="M3.4 18.8 C3.4 15.8 5.6 13.8 8.4 13.8 C11.2 13.8 13.4 15.8 13.4 18.8" fill="#fafafa" stroke="#333" stroke-width="1.1"/></svg>
</body></html>
